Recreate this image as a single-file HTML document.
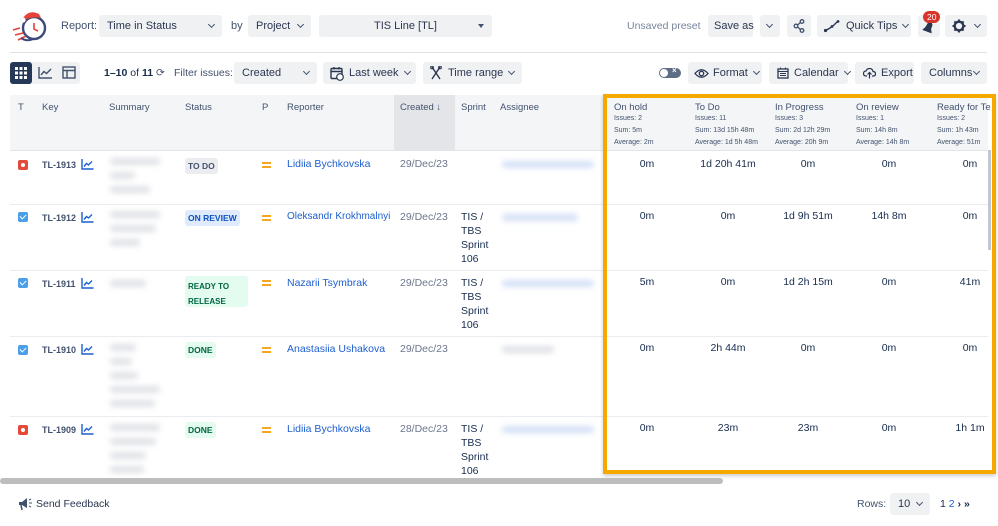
<!DOCTYPE html>
<html><head><meta charset="utf-8">
<style>
*{margin:0;padding:0;box-sizing:border-box}
body{width:998px;height:526px;overflow:hidden;background:#fff;font-family:"Liberation Sans",sans-serif;color:#172b4d;position:relative;font-size:12px}
.a{position:absolute;white-space:nowrap}
.btn{position:absolute;background:#f0f1f3;border-radius:3px;height:22px;font-size:11px;color:#2a3650;display:flex;align-items:center;padding:0 8px;white-space:nowrap}
.btn svg{flex-shrink:0}
.btn span.t{margin-right:6px}
.chev{display:inline-block;flex-shrink:0;width:5px;height:5px;border-right:1.5px solid #42526e;border-bottom:1.5px solid #42526e;transform:rotate(45deg);margin-left:auto;margin-top:-3px}
.hd{font-size:9.5px;color:#42526e}
.sub{font-size:7px;color:#42526e;line-height:12px}
.key{font-size:9px;color:#42526e;font-weight:bold}
.link{color:#1d5fd0;font-size:10.5px}
.date{color:#6b778c;font-size:10.5px}
.val{font-size:10.5px;color:#172b4d;text-align:center;width:80px}
.blur{position:absolute;background:#d3d6dc;height:7px;border-radius:3px;filter:blur(3px);opacity:.7}
.bblur{position:absolute;background:#c3d3f2;height:7px;border-radius:3px;filter:blur(3px);opacity:.7}
.lz{font-size:8.5px;font-weight:bold;border-radius:3px;padding:3px 3px;position:absolute}
.line{position:absolute;height:1px;background:#ebecf0}
.chk{position:absolute;width:10px;height:10px;border-radius:2px;background:#4a9fe8}
.chk:after{content:"";position:absolute;left:3px;top:1px;width:3px;height:5px;border-right:1.5px solid #fff;border-bottom:1.5px solid #fff;transform:rotate(45deg)}
.bug{position:absolute;width:10px;height:10px;border-radius:2px;background:#e5493a}
.bug:after{content:"";position:absolute;left:3px;top:3px;width:4px;height:4px;border-radius:50%;background:#fff}
.eq{position:absolute;width:9px;height:6px;border-top:2px solid #f5a623;border-bottom:2px solid #f5a623}
.ch{position:absolute}
.sp{position:absolute;font-size:10.5px;line-height:14px;white-space:normal;width:34px}
</style></head><body>

<svg class="a" style="left:9px;top:8px" width="40" height="36" viewBox="0 0 40 36">
<circle cx="25" cy="20" r="11" fill="#fff" stroke="#3c4a78" stroke-width="2.4"/>
<path d="M14 10 Q20 1 30 6 L32 10 Q22 8 14 13Z" fill="#e8413a"/>
<circle cx="14" cy="12" r="2.5" fill="#fff" stroke="#ddd" stroke-width=".5"/>
<path d="M25 15 L25 21 L29 23" stroke="#e8413a" stroke-width="1.6" fill="none"/>
<path d="M4 22 L11 20 M6 27 L14 25 M9 32 L17 28" stroke="#e8413a" stroke-width="1.6"/>
<path d="M12 30 Q18 34 24 31" stroke="#3c4a78" stroke-width="2" fill="none"/>
</svg>

<div class="a" style="left:61px;top:20px;font-size:11px;color:#42526e">Report:</div>
<div class="btn" style="left:99px;top:15px;width:123px">Time in Status<span class="chev"></span></div>
<div class="a" style="left:231px;top:20px;font-size:11px;color:#42526e">by</div>
<div class="btn" style="left:248px;top:15px;width:63px">Project<span class="chev"></span></div>
<div class="btn" style="left:319px;top:15px;width:173px;justify-content:center">TIS Line [TL]<span style="position:absolute;right:8px;top:9px;border:3.5px solid transparent;border-top:4px solid #42526e"></span></div>

<div class="a" style="left:627px;top:20px;font-size:10.5px;color:#7a869a">Unsaved preset</div>
<div class="btn" style="left:708px;top:15px;width:45px;padding:0 6px">Save as</div>
<div class="btn" style="left:760px;top:15px;width:20px;padding:0 7px"><span class="chev" style="margin-left:0"></span></div>
<div class="btn" style="left:787px;top:15px;width:24px;padding:0">
<svg width="24" height="22" viewBox="0 0 24 22"><circle cx="15" cy="6.5" r="1.8" fill="none" stroke="#42526e" stroke-width="1.3"/><circle cx="9" cy="11" r="1.8" fill="none" stroke="#42526e" stroke-width="1.3"/><circle cx="15" cy="15.5" r="1.8" fill="none" stroke="#42526e" stroke-width="1.3"/><path d="M10.5 10 L13.5 7.5 M10.5 12 L13.5 14.5" stroke="#42526e" stroke-width="1.3"/></svg></div>
<div class="btn" style="left:817px;top:15px;width:94px;padding-left:6px">
<svg width="18" height="14" viewBox="0 0 18 14"><path d="M2 12 L7 9 L11 6 L15 2" stroke="#2a3650" stroke-width="1.4" fill="none"/><circle cx="2.5" cy="11.5" r="1.6" fill="#2a3650"/><circle cx="9" cy="7.5" r="1.4" fill="#2a3650"/><circle cx="15" cy="2.5" r="1.4" fill="#2a3650"/></svg>
<span class="t" style="margin-left:5px">Quick Tips</span><span class="chev"></span></div>
<div class="btn" style="left:918px;top:15px;width:22px;padding:0">
<svg width="22" height="22" viewBox="0 0 22 22"><path d="M6 17 L16 17 L14 13 L14 9 Q12 5 9 8 L8 13Z" fill="#2a3650" transform="rotate(20 11 11)"/></svg></div>
<div class="a" style="left:923px;top:11px;background:#d9342b;color:#fff;font-size:8.5px;border-radius:7px;padding:1px 4px;line-height:10px">20</div>
<div class="btn" style="left:945px;top:15px;width:42px;padding:0 7px">
<svg width="14" height="14" viewBox="0 0 14 14"><circle cx="7" cy="7" r="4.3" fill="none" stroke="#2a3650" stroke-width="2.3"/><path d="M7 0.5V3M7 11V13.5M0.5 7H3M11 7H13.5M2.4 2.4L4 4M10 10L11.6 11.6M2.4 11.6L4 10M10 4L11.6 2.4" stroke="#2a3650" stroke-width="2"/></svg><span class="chev"></span></div>

<div class="a" style="left:10px;top:52px;width:977px;height:1px;background:#dfe1e6"></div>

<div class="a" style="left:10px;top:62px;width:70px;height:22px;background:#f0f1f3;border-radius:3px"></div>
<div class="a" style="left:10px;top:62px;width:22px;height:22px;background:#253858;border-radius:3px"></div>
<svg class="a" style="left:15px;top:67px" width="12" height="12" viewBox="0 0 12 12" fill="#fff"><rect x="0" y="0" width="3" height="3"/><rect x="4.5" y="0" width="3" height="3"/><rect x="9" y="0" width="3" height="3"/><rect x="0" y="4.5" width="3" height="3"/><rect x="4.5" y="4.5" width="3" height="3"/><rect x="9" y="4.5" width="3" height="3"/><rect x="0" y="9" width="3" height="3"/><rect x="4.5" y="9" width="3" height="3"/><rect x="9" y="9" width="3" height="3"/></svg>
<svg class="a" style="left:38px;top:66px" width="15" height="13" viewBox="0 0 15 13"><path d="M1 1V12H14" stroke="#42526e" stroke-width="1.4" fill="none"/><path d="M3 9L6 5.5L8.5 7.5L13 3" stroke="#42526e" stroke-width="1.4" fill="none"/></svg>
<svg class="a" style="left:62px;top:66px" width="14" height="13" viewBox="0 0 14 13"><rect x="1" y="1" width="12" height="11" stroke="#42526e" stroke-width="1.4" fill="none"/><path d="M1 4.5H13M5 4.5V12" stroke="#42526e" stroke-width="1.4"/></svg>
<div class="a" style="left:104px;top:67px;font-size:10.5px;color:#172b4d"><b>1–10</b> of <b>11</b> <span style="color:#42526e">⟳</span></div>
<div class="a" style="left:174px;top:67px;font-size:10.5px;color:#42526e">Filter issues:</div>
<div class="btn" style="left:234px;top:62px;width:83px">Created<span class="chev"></span></div>
<div class="btn" style="left:323px;top:62px;width:93px;padding-left:7px">
<svg width="14" height="15" viewBox="0 0 14 15"><rect x="1" y="2.5" width="11" height="10" rx="1" stroke="#2a3650" stroke-width="1.4" fill="none"/><path d="M1 5.5H12M4 1V3.5M9 1V3.5" stroke="#2a3650" stroke-width="1.4"/><circle cx="10" cy="11" r="3.3" fill="#fff" stroke="#2a3650" stroke-width="1.2"/></svg>
<span class="t" style="margin-left:5px">Last week</span><span class="chev"></span></div>
<div class="btn" style="left:423px;top:62px;width:99px;padding-left:7px">
<svg width="12" height="14" viewBox="0 0 12 14"><path d="M2 1 L10 13 M10 1 L2 13" stroke="#2a3650" stroke-width="1.4"/><circle cx="2" cy="1.5" r="1.4" fill="none" stroke="#2a3650"/><circle cx="10" cy="1.5" r="1.4" fill="none" stroke="#2a3650"/></svg>
<span class="t" style="margin-left:6px">Time range</span><span class="chev"></span></div>

<div class="a" style="left:659px;top:68px;width:22px;height:10px;border-radius:5px;background:#5e6c84"></div>
<div class="a" style="left:660px;top:69px;width:8px;height:8px;border-radius:50%;background:#fff"></div>
<div class="a" style="left:672px;top:66px;font-size:8px;color:#fff;font-weight:bold">×</div>
<div class="btn" style="left:688px;top:62px;width:74px;padding-left:6px">
<svg width="15" height="11" viewBox="0 0 15 11"><path d="M1 5.5 Q7.5 -2 14 5.5 Q7.5 13 1 5.5Z" fill="none" stroke="#2a3650" stroke-width="1.3"/><circle cx="7.5" cy="5.5" r="2.2" fill="none" stroke="#2a3650" stroke-width="1.3"/></svg>
<span class="t" style="margin-left:4px">Format</span><span class="chev"></span></div>
<div class="btn" style="left:769px;top:62px;width:79px;padding-left:8px">
<svg width="12" height="12" viewBox="0 0 12 12"><rect x="1" y="2" width="10" height="9" stroke="#2a3650" stroke-width="1.3" fill="none"/><path d="M1 4.5H11M3.5 0.5V2.5M8.5 0.5V2.5M3 6.5H9M3 8.5H9" stroke="#2a3650" stroke-width="1"/></svg>
<span class="t" style="margin-left:5px">Calendar</span><span class="chev"></span></div>
<div class="btn" style="left:855px;top:62px;width:59px;padding-left:8px">
<svg width="13" height="11" viewBox="0 0 13 11"><path d="M4 8H3 Q0.5 8 0.5 5.5 Q0.5 3 3 3 Q4 0.5 6.5 0.5 Q9.5 0.5 10 3.5 Q12.5 3.5 12.5 6 Q12.5 8 10 8H9" fill="none" stroke="#2a3650" stroke-width="1.2"/><path d="M6.5 4.5V10.5M4.5 6.5L6.5 4.5L8.5 6.5" fill="none" stroke="#2a3650" stroke-width="1.2"/></svg>
<span style="margin-left:5px">Export</span></div>
<div class="btn" style="left:921px;top:62px;width:66px">Columns<span class="chev"></span></div>

<div class="a" style="left:10px;top:95px;width:978px;height:56px;background:#f4f5f7;border-bottom:1px solid #e3e5e9"></div>
<div class="a" style="left:394px;top:95px;width:61px;height:56px;background:#e4e5e8"></div>
<div class="a hd" style="left:18px;top:102px">T</div>
<div class="a hd" style="left:42px;top:102px">Key</div>
<div class="a hd" style="left:109px;top:102px">Summary</div>
<div class="a hd" style="left:185px;top:102px">Status</div>
<div class="a hd" style="left:262px;top:102px">P</div>
<div class="a hd" style="left:287px;top:102px">Reporter</div>
<div class="a hd" style="left:400px;top:102px">Created ↓</div>
<div class="a hd" style="left:461px;top:102px">Sprint</div>
<div class="a hd" style="left:500px;top:102px">Assignee</div>

<div class="a" style="left:614px;top:102px"><div class="hd">On hold</div><div class="sub">Issues: 2<br>Sum: 5m<br>Average: 2m</div></div>
<div class="a" style="left:695px;top:102px"><div class="hd">To Do</div><div class="sub">Issues: 11<br>Sum: 13d 15h 48m<br>Average: 1d 5h 48m</div></div>
<div class="a" style="left:775px;top:102px"><div class="hd">In Progress</div><div class="sub">Issues: 3<br>Sum: 2d 12h 29m<br>Average: 20h 9m</div></div>
<div class="a" style="left:856px;top:102px"><div class="hd">On review</div><div class="sub">Issues: 1<br>Sum: 14h 8m<br>Average: 14h 8m</div></div>
<div class="a" style="left:937px;top:102px;width:54px;overflow:hidden"><div class="hd">Ready for Tes</div><div class="sub">Issues: 2<br>Sum: 1h 43m<br>Average: 51m</div></div>

<div class="line" style="left:10px;top:204px;width:978px"></div>
<div class="line" style="left:10px;top:270px;width:978px"></div>
<div class="line" style="left:10px;top:336px;width:978px"></div>
<div class="line" style="left:10px;top:416px;width:978px"></div>

<div class="bug" style="left:18px;top:160px"></div>
<div class="a key" style="left:42px;top:160px">TL-1913</div>
<svg class="ch" style="left:81px;top:159px" width="13" height="11" viewBox="0 0 13 11"><path d="M1 0V10H12.5" stroke="#1d5fd0" stroke-width="1.4" fill="none"/><path d="M3 7.5L5.5 4.5L7.5 6L11 2.5" stroke="#1d5fd0" stroke-width="1.4" fill="none"/></svg>
<div class="blur" style="left:110px;top:158px;width:50px"></div><div class="blur" style="left:110px;top:172px;width:25px"></div><div class="blur" style="left:110px;top:186px;width:40px"></div>
<div class="lz" style="left:185px;top:158px;background:#ebecf0;color:#42526e">TO DO</div>
<div class="eq" style="left:262px;top:162px"></div>
<div class="a link" style="left:287px;top:158px">Lidiia Bychkovska</div>
<div class="a date" style="left:400px;top:158px">29/Dec/23</div>
<div class="bblur" style="left:502px;top:161px;width:92px"></div>

<div class="chk" style="left:18px;top:212px"></div>
<div class="a key" style="left:42px;top:213px">TL-1912</div>
<svg class="ch" style="left:81px;top:212px" width="13" height="11" viewBox="0 0 13 11"><path d="M1 0V10H12.5" stroke="#1d5fd0" stroke-width="1.4" fill="none"/><path d="M3 7.5L5.5 4.5L7.5 6L11 2.5" stroke="#1d5fd0" stroke-width="1.4" fill="none"/></svg>
<div class="blur" style="left:110px;top:211px;width:50px"></div><div class="blur" style="left:110px;top:225px;width:46px"></div><div class="blur" style="left:110px;top:239px;width:30px"></div>
<div class="lz" style="left:185px;top:210px;background:#dfeafd;color:#0b52c4">ON REVIEW</div>
<div class="eq" style="left:262px;top:215px"></div>
<div class="a link" style="left:287px;top:211px;font-size:10px">Oleksandr Krokhmalnyi</div>
<div class="a date" style="left:400px;top:211px">29/Dec/23</div>
<div class="sp" style="left:461px;top:210px">TIS / TBS Sprint 106</div>
<div class="bblur" style="left:502px;top:214px;width:76px"></div>

<div class="chk" style="left:18px;top:278px"></div>
<div class="a key" style="left:42px;top:279px">TL-1911</div>
<svg class="ch" style="left:81px;top:278px" width="13" height="11" viewBox="0 0 13 11"><path d="M1 0V10H12.5" stroke="#1d5fd0" stroke-width="1.4" fill="none"/><path d="M3 7.5L5.5 4.5L7.5 6L11 2.5" stroke="#1d5fd0" stroke-width="1.4" fill="none"/></svg>
<div class="blur" style="left:110px;top:280px;width:36px"></div>
<div class="a" style="left:185px;top:276px;width:63px;height:31px;background:#e3fcef;border-radius:3px"></div>
<div class="a" style="left:188px;top:279px;font-size:8px;font-weight:bold;color:#006644;line-height:15px">READY TO<br>RELEASE</div>
<div class="eq" style="left:262px;top:280px"></div>
<div class="a link" style="left:287px;top:277px">Nazarii Tsymbrak</div>
<div class="a date" style="left:400px;top:277px">29/Dec/23</div>
<div class="sp" style="left:461px;top:276px">TIS / TBS Sprint 106</div>
<div class="bblur" style="left:502px;top:280px;width:92px"></div>

<div class="chk" style="left:18px;top:345px"></div>
<div class="a key" style="left:42px;top:345px">TL-1910</div>
<svg class="ch" style="left:81px;top:344px" width="13" height="11" viewBox="0 0 13 11"><path d="M1 0V10H12.5" stroke="#1d5fd0" stroke-width="1.4" fill="none"/><path d="M3 7.5L5.5 4.5L7.5 6L11 2.5" stroke="#1d5fd0" stroke-width="1.4" fill="none"/></svg>
<div class="blur" style="left:110px;top:344px;width:26px"></div><div class="blur" style="left:110px;top:358px;width:22px"></div><div class="blur" style="left:110px;top:372px;width:28px"></div><div class="blur" style="left:110px;top:386px;width:50px"></div><div class="blur" style="left:110px;top:400px;width:45px"></div>
<div class="lz" style="left:185px;top:342px;background:#e3fcef;color:#006644">DONE</div>
<div class="eq" style="left:262px;top:347px"></div>
<div class="a link" style="left:287px;top:343px">Anastasiia Ushakova</div>
<div class="a date" style="left:400px;top:343px">29/Dec/23</div>
<div class="blur" style="left:502px;top:346px;width:52px"></div>

<div class="bug" style="left:18px;top:425px"></div>
<div class="a key" style="left:42px;top:425px">TL-1909</div>
<svg class="ch" style="left:81px;top:424px" width="13" height="11" viewBox="0 0 13 11"><path d="M1 0V10H12.5" stroke="#1d5fd0" stroke-width="1.4" fill="none"/><path d="M3 7.5L5.5 4.5L7.5 6L11 2.5" stroke="#1d5fd0" stroke-width="1.4" fill="none"/></svg>
<div class="blur" style="left:110px;top:424px;width:50px"></div><div class="blur" style="left:110px;top:438px;width:46px"></div><div class="blur" style="left:110px;top:452px;width:36px"></div><div class="blur" style="left:110px;top:466px;width:34px"></div>
<div class="lz" style="left:185px;top:422px;background:#e3fcef;color:#006644">DONE</div>
<div class="eq" style="left:262px;top:427px"></div>
<div class="a link" style="left:287px;top:423px">Lidiia Bychkovska</div>
<div class="a date" style="left:400px;top:423px">28/Dec/23</div>
<div class="sp" style="left:461px;top:422px">TIS / TBS Sprint 106</div>
<div class="bblur" style="left:502px;top:426px;width:92px"></div>

<div class="a val" style="left:607px;top:158px">0m</div><div class="a val" style="left:688px;top:158px">1d 20h 41m</div><div class="a val" style="left:768px;top:158px">0m</div><div class="a val" style="left:849px;top:158px">0m</div><div class="a val" style="left:930px;top:158px">0m</div>
<div class="a val" style="left:607px;top:210px">0m</div><div class="a val" style="left:688px;top:210px">0m</div><div class="a val" style="left:768px;top:210px">1d 9h 51m</div><div class="a val" style="left:849px;top:210px">14h 8m</div><div class="a val" style="left:930px;top:210px">0m</div>
<div class="a val" style="left:607px;top:276px">5m</div><div class="a val" style="left:688px;top:276px">0m</div><div class="a val" style="left:768px;top:276px">1d 2h 15m</div><div class="a val" style="left:849px;top:276px">0m</div><div class="a val" style="left:930px;top:276px">41m</div>
<div class="a val" style="left:607px;top:342px">0m</div><div class="a val" style="left:688px;top:342px">2h 44m</div><div class="a val" style="left:768px;top:342px">0m</div><div class="a val" style="left:849px;top:342px">0m</div><div class="a val" style="left:930px;top:342px">0m</div>
<div class="a val" style="left:607px;top:422px">0m</div><div class="a val" style="left:688px;top:422px">23m</div><div class="a val" style="left:768px;top:422px">23m</div><div class="a val" style="left:849px;top:422px">0m</div><div class="a val" style="left:930px;top:422px">1h 1m</div>

<div class="a" style="left:988px;top:150px;width:3px;height:100px;background:#c1c7d0"></div>

<div class="a" style="left:603px;top:94px;width:393px;height:380px;border:4px solid #f5a800;box-shadow:0 2px 4px rgba(0,0,0,.2)"></div>

<div class="a" style="left:0;top:478px;width:723px;height:6px;background:#bdbdbd;border-radius:3px"></div>

<svg class="a" style="left:17px;top:497px" width="16" height="14" viewBox="0 0 16 14"><path d="M2 5H5L10 1V11L5 8H2Z" fill="#42526e"/><path d="M4 8L5 13" stroke="#42526e" stroke-width="1.5"/><path d="M12 3L14 2M12 6H15M12 9L14 10" stroke="#42526e" stroke-width="1"/></svg>
<div class="a" style="left:36px;top:498px;font-size:10.5px;color:#2a3650">Send Feedback</div>
<div class="a" style="left:857px;top:498px;font-size:10.5px;color:#42526e">Rows:</div>
<div class="btn" style="left:890px;top:493px;width:40px;height:22px">10<span class="chev"></span></div>
<div class="a" style="left:940px;top:498px;font-size:10.5px;color:#172b4d">1 <span style="color:#1d5fd0">2</span> <b>›</b> <b>»</b></div>

</body></html>
